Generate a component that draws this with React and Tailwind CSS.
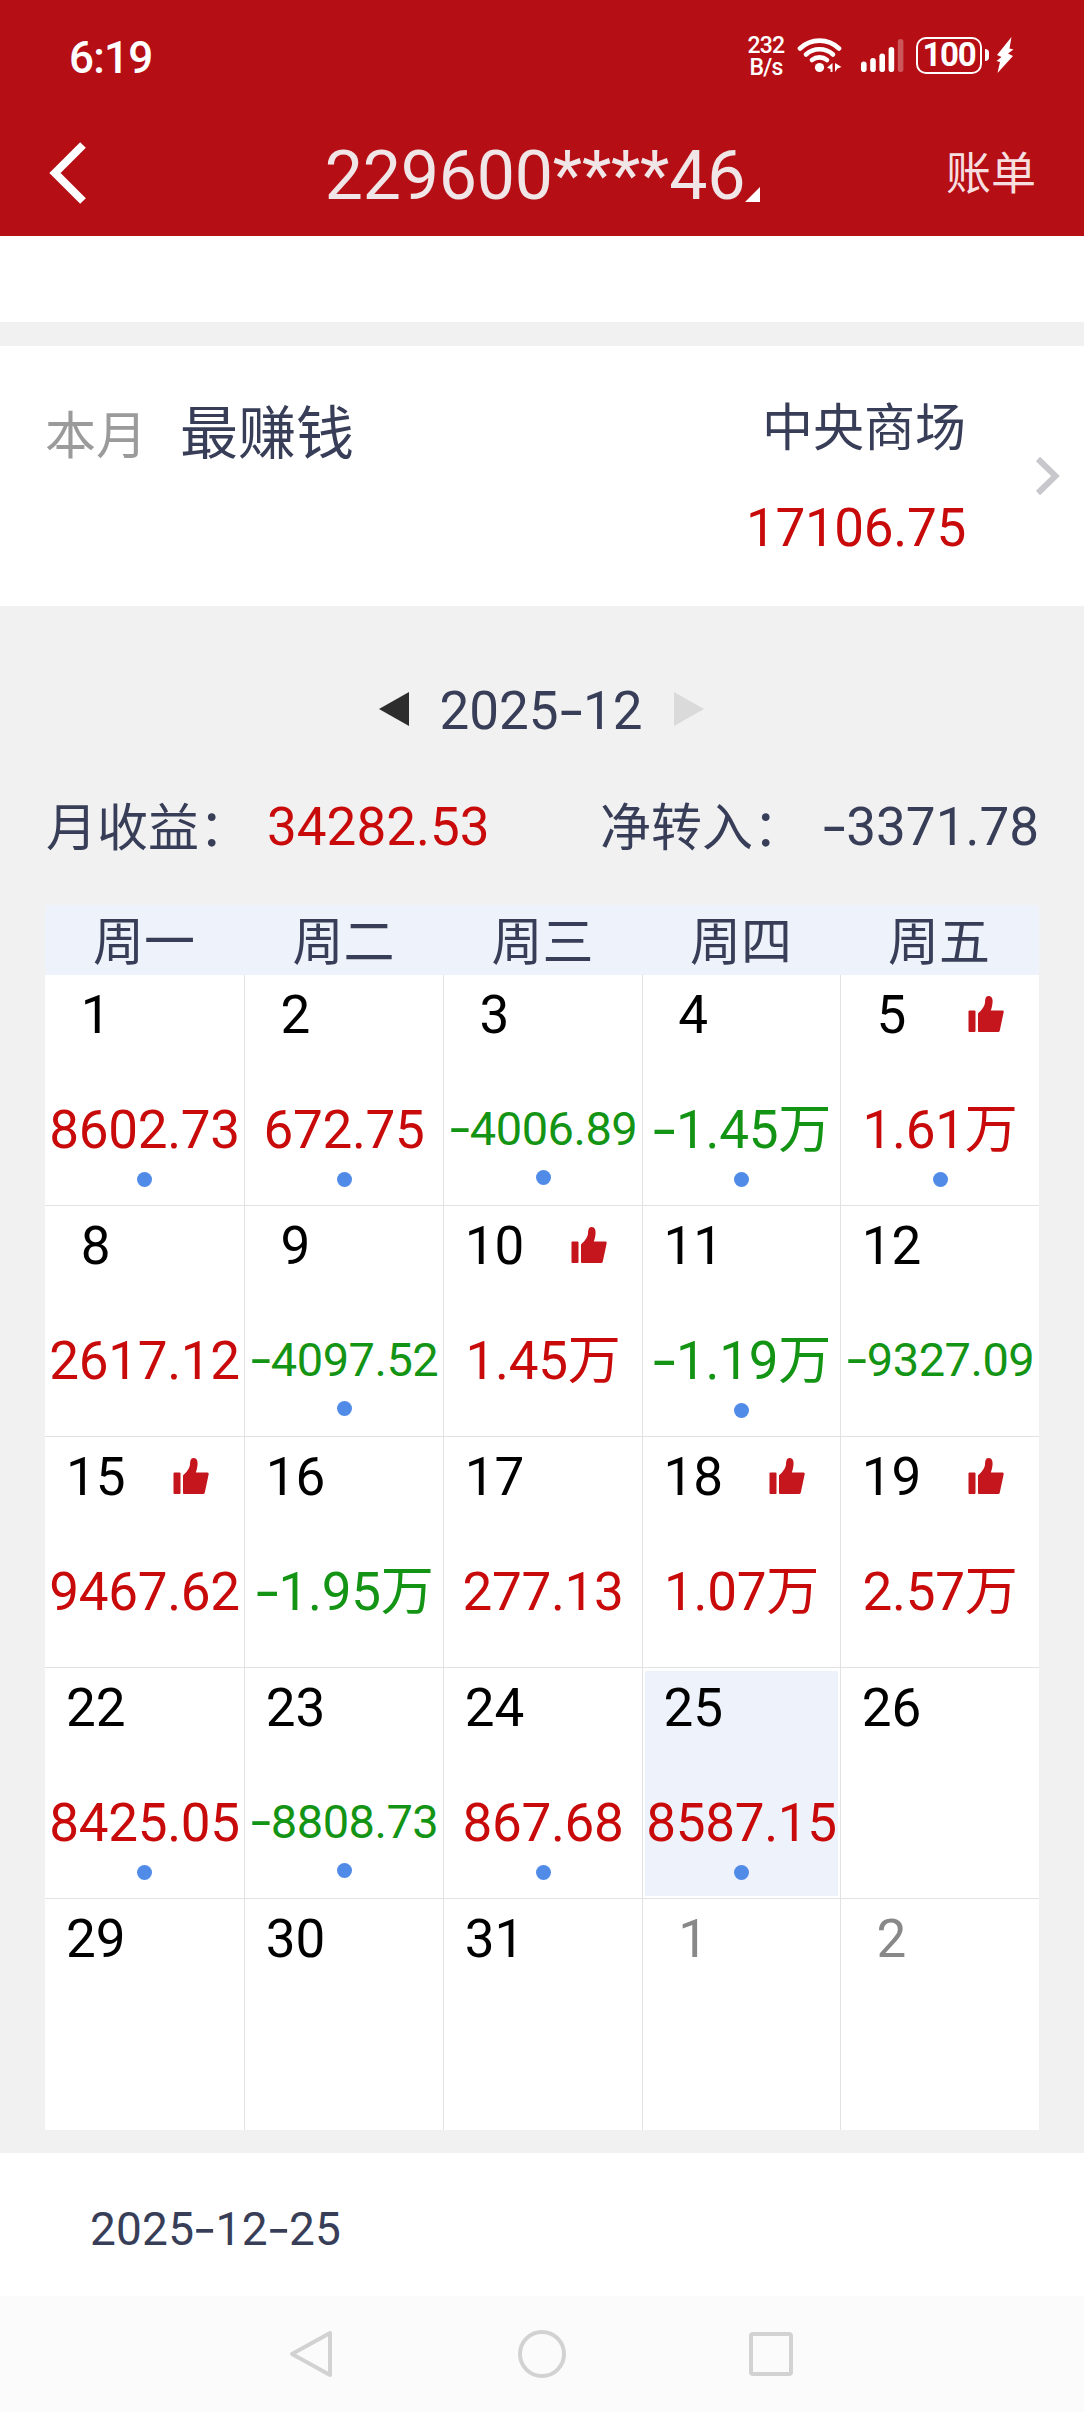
import React, { useState } from "react";
import clsx from "clsx";

const weekdays = ["周一", "周二", "周三", "周四", "周五"];

const days = [
  { id: "12-01", day: 1, value: "8602.73", dot: true },
  { id: "12-02", day: 2, value: "672.75", dot: true },
  { id: "12-03", day: 3, value: "-4006.89", dot: true },
  { id: "12-04", day: 4, value: "-1.45万", dot: true },
  { id: "12-05", day: 5, value: "1.61万", dot: true, like: true },
  { id: "12-08", day: 8, value: "2617.12" },
  { id: "12-09", day: 9, value: "-4097.52", dot: true },
  { id: "12-10", day: 10, value: "1.45万", like: true },
  { id: "12-11", day: 11, value: "-1.19万", dot: true },
  { id: "12-12", day: 12, value: "-9327.09" },
  { id: "12-15", day: 15, value: "9467.62", like: true },
  { id: "12-16", day: 16, value: "-1.95万" },
  { id: "12-17", day: 17, value: "277.13" },
  { id: "12-18", day: 18, value: "1.07万", like: true },
  { id: "12-19", day: 19, value: "2.57万", like: true },
  { id: "12-22", day: 22, value: "8425.05", dot: true },
  { id: "12-23", day: 23, value: "-8808.73", dot: true },
  { id: "12-24", day: 24, value: "867.68", dot: true },
  { id: "12-25", day: 25, value: "8587.15", dot: true },
  { id: "12-26", day: 26 },
  { id: "12-29", day: 29 },
  { id: "12-30", day: 30 },
  { id: "12-31", day: 31 },
  { id: "01-01", day: 1, outside: true },
  { id: "01-02", day: 2, outside: true },
];

// Roboto's hyphen is too short next to the figures, so it is set in Inter
function Num({ children }) {
  return String(children)
    .split(/(-)/)
    .map((part, i) =>
      part === "-" ? (
        <span
          key={i}
          className="inline-block scale-x-115 font-['Inter',sans-serif] leading-none"
        >
          -
        </span>
      ) : (
        part
      )
    );
}

function ThumbIcon() {
  return (
    <svg width="36" height="38" viewBox="0 0 36 38" fill="#c4161c">
      <rect x="0.5" y="15.5" width="7" height="21.5" rx="1" />
      <path d="M10 18.5C13 15.5 16.500 12 17 7.500C17.200 4 17.500 1 20.500 1C24 1 25 4.500 24.500 8C24.200 11 23.500 13.500 22.800 15.500H34.500Q36 15.500 35.700 17L31.800 35.500Q31.500 37 30 37H11Q10 37 10 36Z" />
    </svg>
  );
}

function StatusBar() {
  return (
    <div className="flex h-[110px] items-center justify-between pl-[69px] pr-[70px] text-white">
      <span className="pt-[6px] text-[44px] font-medium leading-[50px] tracking-[-0.8px]">
        6:19
      </span>
      <div className="flex items-center">
        <div className="mt-[3px] w-[38px] text-center text-[23px] font-medium leading-[22px] tracking-[-0.8px]">
          <div>232</div>
          <div>B/s</div>
        </div>
        <svg className="ml-[12px]" width="46" height="38" viewBox="0 0 46 38">
          <g fill="none" stroke="#fff" strokeWidth="4.6" strokeLinecap="round">
            <path d="M3 12.500A28 28 0 0 1 42 12.500" />
            <path d="M9 18.500A20 20 0 0 1 36 18.500" />
            <path d="M15 24A12 12 0 0 1 30 24" />
          </g>
          <circle cx="22.500" cy="31.500" r="4.600" fill="#fff" />
          <path d="M35.500 27V36H33.500V33L30 31.800Z M38 27L44.500 31L40.500 32.500L38 36Z" fill="#fff" />
        </svg>
        <svg className="ml-[18px]" width="43" height="38" viewBox="0 0 43 38" fill="#fff">
          <rect x="0" y="25.500" width="5.600" height="10.500" rx="2.800" />
          <rect x="9.200" y="22" width="5.600" height="14" rx="2.800" />
          <rect x="18.400" y="17.500" width="5.600" height="18.500" rx="2.800" />
          <rect x="27.600" y="11" width="5.600" height="25" rx="2.800" />
          <rect x="36.800" y="3" width="5.600" height="33" rx="2.800" opacity="0.3" />
        </svg>
        <div className="ml-[12px] flex h-[37px] w-[66px] items-center justify-center rounded-[10px] border-[2.5px] border-white text-[33px] font-bold leading-[32px] tracking-[-1.2px]">
          100
        </div>
        <div className="ml-[3px] h-[12px] w-[4px] rounded-r-full bg-white" />
        <svg className="ml-[7px]" width="18" height="38" viewBox="0 0 18 38" fill="#fff">
          <path d="M15.500 1L1 19L5.500 21L0.500 25L4 26L1.500 37L17 20L12 17.500L17.500 13.500L13.500 12.500Z" />
        </svg>
      </div>
    </div>
  );
}

function Header() {
  return (
    <header className="h-[236px] bg-[#b50f15]">
      <StatusBar />
      <div className="flex h-[126px] items-center justify-between pl-[48px] pr-[47px]">
        <button className="w-[92px]">
          <svg width="40" height="64" viewBox="0 0 40 64" fill="none">
            <path d="M35 4L7 32L35 60" stroke="#fff" strokeWidth="8" />
          </svg>
        </button>
        <h1 className="flex items-end text-[68px] leading-[80px] tracking-[-0.2px] text-[#f0e6e7]">
          <span className="pt-[5px]">229600****46</span>
          <svg className="mb-[14px]" width="15" height="15" viewBox="0 0 15 15">
            <path d="M15 0V15H0Z" fill="#fff" />
          </svg>
        </h1>
        <button className="w-[92px] pt-[4px] text-[45px] leading-[60px] text-[#f7dfe0]">
          账单
        </button>
      </div>
    </header>
  );
}

function BestStock() {
  return (
    <section className="flex h-[260px] items-center bg-white pl-[45px] pr-[22px] text-[#383e57]">
      <div className="flex h-full flex-1 items-baseline pt-[48px] leading-[80px]">
        <span className="text-[51px] text-[#9b9b9b]">本月</span>
        <span className="ml-[33px] text-[58px]">最赚钱</span>
      </div>
      <div className="flex h-full flex-col items-end pt-[34px] text-[51px]">
        <span className="leading-[98px]">中央商场</span>
        <span className="text-[53px] leading-[100px] tracking-[-0.3px] text-[#c80a0a]">
          17106.75
        </span>
      </div>
      <svg className="ml-[69px]" width="27" height="40" viewBox="0 0 27 40" fill="none">
        <path d="M3 3L20.500 20L3 37" stroke="#c8c8cc" strokeWidth="6" />
      </svg>
    </section>
  );
}

function DayCell({ item, selected, last, bottom, onSelect }) {
  const negative = item.value?.startsWith("-");
  // long negative amounts are set smaller so they stay inside the cell
  const small = item.value?.length > 7;

  return (
    <div
      onClick={onSelect}
      className={clsx(
        "h-[231px] border-[#e2e2e2] bg-white pb-[2px] pl-[2px] pr-[2px] pt-[3px]",
        !last && "border-r",
        !bottom && "border-b"
      )}
    >
      <div
        className={clsx(
          "flex h-full flex-col items-center",
          selected && "bg-[#eef2fa]"
        )}
      >
        <div className="grid h-[73px] w-full grid-cols-2">
          <span
            className={clsx(
              "pt-px text-center text-[53px] leading-[73px]",
              item.outside ? "text-[#888888]" : "text-black"
            )}
          >
            {item.day}
          </span>
          {item.like && (
            <span className="flex items-center justify-center pb-[3px] pr-[5px]">
              <ThumbIcon />
            </span>
          )}
        </div>
        {item.value && (
          <div
            className={clsx(
              "mt-[44px] whitespace-nowrap",
              small
                ? "h-[68px] text-[47px] leading-[67px] tracking-[-0.5px]"
                : "h-[70px] text-[53px] leading-[70px] tracking-[-0.3px]",
              negative ? "text-[#149414]" : "text-[#c80a0a]"
            )}
          >
            <Num>{item.value}</Num>
          </div>
        )}
        {item.dot && (
          <div className="mt-[7px] size-[15px] shrink-0 rounded-full bg-[#518be8]" />
        )}
      </div>
    </div>
  );
}

function Calendar({ selected, setSelected }) {
  return (
    <section className="h-[1547px] bg-[#f1f1f1] px-[45px] pt-[53px] text-[#383e57]">
      {/* Month switch */}
      <div className="flex h-[100px] items-center justify-center pr-[2px] text-[53px]">
        <svg width="30" height="34" viewBox="0 0 30 34">
          <path d="M30 0V34L0 17Z" fill="#2d2d2d" />
        </svg>
        <span className="w-[265px] pt-[6px] text-center">
          <Num>2025-12</Num>
        </span>
        <svg width="30" height="34" viewBox="0 0 30 34">
          <path d="M0 0V34L30 17Z" fill="#dadada" />
        </svg>
      </div>

      {/* Month totals */}
      <div className="flex h-[146px] justify-between text-[51px] leading-[136px]">
        <div className="flex">
          <span className="pl-px pt-[2px]">月收益：</span>
          <span className="ml-[17px] text-[53px] text-[#c80a0a]">34282.53</span>
        </div>
        <div className="flex">
          <span className="pt-[2px]">净转入：</span>
          <span className="ml-[18px] text-[53px]">
            <Num>-3371.78</Num>
          </span>
        </div>
      </div>

      <div className="grid grid-cols-[200px_199px_199px_198px_198px]">
        {weekdays.map((name) => (
          <div
            key={name}
            className="h-[70px] bg-[#eef2fa] pr-[2px] pt-[3px] text-center text-[51px] leading-[70px]"
          >
            {name}
          </div>
        ))}
        {days.map((item, i) => (
          <DayCell
            key={item.id}
            item={item}
            selected={item.id === selected}
            last={i % 5 === 4}
            bottom={i >= 20}
            onSelect={() => setSelected(item.id)}
          />
        ))}
      </div>
    </section>
  );
}

function NavBar() {
  return (
    <nav className="flex h-[116px] items-center bg-[#fbfbfb] pl-[288px]">
      <svg width="46" height="50" viewBox="0 0 46 50" fill="none">
        <path
          d="M42 4V46L4 25Z"
          stroke="#d2d2d2"
          strokeWidth="4"
          strokeLinejoin="round"
        />
      </svg>
      <div className="ml-[184px] size-[48px] rounded-full border-4 border-[#d2d2d2]" />
      <div className="ml-[183px] size-[44px] rounded-[4px] border-4 border-[#d2d2d2]" />
    </nav>
  );
}

export default function App() {
  const [selected, setSelected] = useState("12-25");

  return (
    <div className="h-[2412px] w-[1084px] overflow-hidden bg-white font-['Roboto','Noto_Sans_CJK_SC',sans-serif]">
      <Header />
      <div className="h-[86px] bg-white" />
      <div className="h-[24px] bg-[#f1f1f1]" />
      <BestStock />
      <Calendar selected={selected} setSelected={setSelected} />
      <div className="h-[143px] bg-white pl-[90px] pt-[36px] text-[46px] leading-[80px] tracking-[0.2px] text-[#383e57]">
        <Num>{`2025-${selected}`}</Num>
      </div>
      <NavBar />
    </div>
  );
}
